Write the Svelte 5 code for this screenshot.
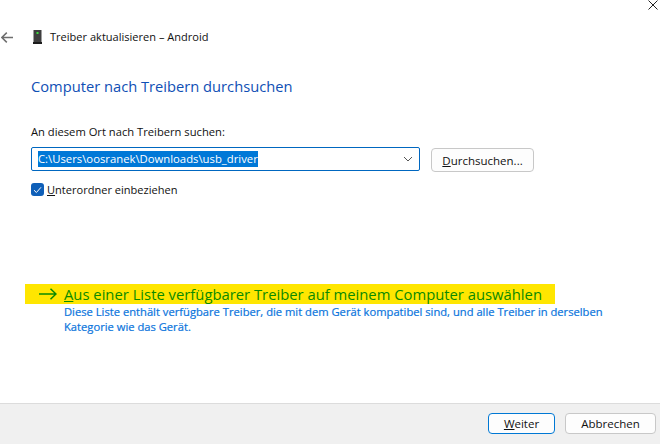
<script>
  let path = 'C:\\Users\\oosranek\\Downloads\\usb_driver';
</script>

<div class="dialog">
  <div class="close-row">
    <svg class="close" width="10" height="10" viewBox="0 0 10 10"><path d="M0.5 0.5l9 9M9.5 0.5l-9 9" stroke="#222" stroke-width="1" fill="none" /></svg>
  </div>

  <div class="title-row">
    <svg class="back" width="12" height="11" viewBox="0 0 12 11"><path d="M12 5.5H1M5.8 0.6L0.9 5.5l4.9 4.9" stroke="#6e6e6e" stroke-width="1.5" fill="none" /></svg>
    <svg class="device" width="9" height="14" viewBox="0 0 9 14">
      <rect x="0.5" y="0" width="8" height="12" fill="#3f3f3f" />
      <rect x="0" y="12" width="9" height="2" fill="#1c1c1c" />
      <rect x="3.5" y="2" width="2" height="2" fill="#3ddc3d" />
    </svg>
    <span class="title">Treiber aktualisieren – Android</span>
  </div>

  <div class="content">
    <h1>Computer nach Treibern durchsuchen</h1>
    <div class="label">An diesem Ort nach Treibern suchen:</div>

    <div class="path-row">
      <div class="combo">
        <span class="selected">{path}</span>
        <svg class="chevron" width="10" height="6" viewBox="0 0 10 6"><path d="M1 1l4 4 4-4" stroke="#555" stroke-width="1" fill="none" /></svg>
      </div>
      <button class="btn browse"><u>D</u>urchsuchen...</button>
    </div>

    <div class="check-row">
      <span class="checkbox">
        <svg width="9" height="8" viewBox="0 0 9 8"><path d="M1 4.2l2.4 2.3L8 1.3" stroke="#fff" stroke-width="1" fill="none" /></svg>
      </span>
      <span class="check-text"><u>U</u>nterordner einbeziehen</span>
    </div>
  </div>

  <div class="pick">
    <div class="pick-link">
      <svg class="arrow" width="18" height="12" viewBox="0 0 18 12"><path d="M0 6h17M11.5 0.7L17 6l-5.5 5.3" stroke="#0a8a00" stroke-width="1.5" fill="none" /></svg>
      <span><u>A</u>us einer Liste verfügbarer Treiber auf meinem Computer auswählen</span>
    </div>
    <p class="pick-desc">Diese Liste enthält verfügbare Treiber, die mit dem Gerät kompatibel sind, und alle Treiber in derselben Kategorie wie das Gerät.</p>
  </div>

  <div class="footer">
    <button class="btn next"><u>W</u>eiter</button>
    <button class="btn cancel">Abbrechen</button>
  </div>
</div>

<style>
  :global(body) {
    margin: 0;
    background: #fff;
  }

  .dialog {
    width: 660px;
    height: 444px;
    display: flex;
    flex-direction: column;
    font-family: "Open Sans", "Noto Sans", sans-serif;
    font-size: 11.2px;
    color: #111;
    overflow: hidden;
  }

  .close-row {
    height: 30px;
    display: flex;
    justify-content: flex-end;
    padding-right: 2px;
  }

  .title-row {
    height: 14px;
    display: flex;
    align-items: center;
  }

  .back {
    margin-left: 1px;
  }

  .device {
    margin-left: 20px;
  }

  .title {
    margin-left: 8px;
    margin-top: -2px;
    font-size: 11.05px;
  }

  .content {
    padding: 0 0 0 31px;
    height: 240px;
  }

  h1 {
    margin: 32px 0 0;
    font-size: 14.7px;
    line-height: 20px;
    font-weight: 400;
    color: #0f4fb5;
  }

  .label {
    margin-top: 28px;
    line-height: 16px;
  }

  .path-row {
    margin-top: 7px;
    display: flex;
    align-items: flex-start;
    gap: 11px;
  }

  .combo {
    box-sizing: border-box;
    width: 389px;
    height: 24px;
    border: 1px solid #0067c0;
    border-radius: 2px;
    display: flex;
    align-items: center;
    justify-content: space-between;
    padding: 0 6px;
  }

  .selected {
    background: #0078d7;
    color: #fff;
    line-height: 16px;
    font-size: 11.3px;
  }

  .btn {
    box-sizing: border-box;
    font: inherit;
    color: #111;
    background: #fdfdfd;
    border: 1px solid #c8c8c8;
    border-radius: 4px;
    padding: 0;
  }

  .browse {
    width: 103px;
    height: 24px;
    margin-top: 1px;
    font-size: 11.5px;
  }

  .check-row {
    margin-top: 10px;
    display: flex;
    align-items: center;
    gap: 3px;
  }

  .check-text {
    font-size: 11.05px;
  }

  .checkbox {
    width: 13px;
    height: 13px;
    background: #0f5fb8;
    border-radius: 3px;
    display: flex;
    align-items: center;
    justify-content: center;
  }

  .pick {
    margin-left: 25px;
    width: 600px;
  }

  .pick-link {
    width: 530px;
    height: 20px;
    background: #ffe600;
    display: flex;
    align-items: center;
    font-size: 14.8px;
    color: #0a8a00;
    white-space: nowrap;
  }

  .arrow {
    margin-left: 14px;
    margin-right: 7px;
  }

  .pick-desc {
    margin: 0 0 0 39px;
    width: 545px;
    font-size: 11.2px;
    line-height: 15px;
    color: #0a74dc;
    -webkit-text-stroke: 0.2px #0a74dc;
  }

  .footer {
    margin-top: auto;
    box-sizing: border-box;
    height: 41px;
    background: #f0f0f0;
    border-top: 1px solid #dcdcdc;
    display: flex;
    justify-content: flex-end;
    align-items: flex-start;
    gap: 10px;
    padding: 9px 4px 0 0;
  }

  .next {
    width: 67px;
    height: 21px;
    border: 1.5px solid #0078d4;
    font-size: 11.5px;
  }

  .cancel {
    width: 91px;
    height: 21px;
    font-size: 11.5px;
  }
</style>
